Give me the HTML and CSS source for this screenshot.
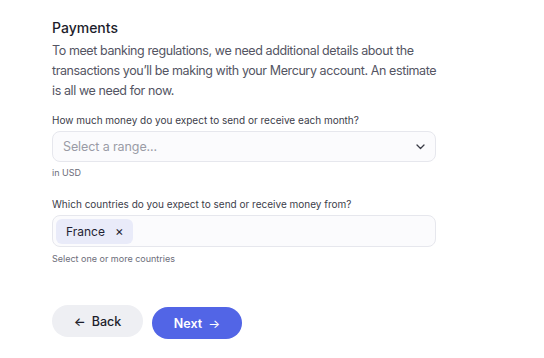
FILE: index.html
```html
<!DOCTYPE html>
<html>
<head>
<meta charset="utf-8">
<link rel="stylesheet" href="styles.css">
</head>
<body>
<main class="page">
  <h1 class="title">Payments</h1>
  <p class="intro">To meet banking regulations, we need additional details about the transactions you’ll be making with your Mercury account. An estimate is all we need for now.</p>

  <div class="field">
    <label class="label">How much money do you expect to send or receive each month?</label>
    <div class="select">
      <span class="placeholder">Select a range...</span>
      <svg class="chevron" width="9" height="6" viewBox="0 0 9 6"><path d="M1 1l3.5 3.5L8 1" fill="none" stroke="#3a3b46" stroke-width="1.3" stroke-linecap="round" stroke-linejoin="round"/></svg>
    </div>
    <div class="hint">in USD</div>
  </div>

  <div class="field field-second">
    <label class="label">Which countries do you expect to send or receive money from?</label>
    <div class="multi">
      <span class="chip">France <span class="chip-x">×</span></span>
    </div>
    <div class="hint hint-second">Select one or more countries</div>
  </div>

  <div class="actions">
    <button class="btn btn-back"><span class="arrow">←</span> Back</button>
    <button class="btn btn-next">Next <span class="arrow">→</span></button>
  </div>
</main>
</body>
</html>
```

FILE: styles.css
```css
* { box-sizing: border-box; }
body {
  margin: 0;
  background: #ffffff;
  font-family: Inter, "Noto Sans", sans-serif;
  color: #1c1c28;
}
.page {
  width: 384px;
  margin-left: 52px;
  padding-top: 18px;
}
.title {
  margin: 0;
  font-size: 14px;
  font-weight: 500;
  line-height: 20px;
  color: #1c1d2b;
}
.intro {
  margin: 3px 0 0;
  font-size: 12.5px;
  letter-spacing: -0.4px;
  line-height: 20px;
  color: #545563;
  width: 390px;
}
.field { margin-top: 12px; }
.field-second { margin-top: 18px; }
.label {
  display: block;
  font-size: 10px;
  line-height: 14px;
  color: #3c3d4a;
}
.select, .multi {
  margin-top: 4px;
  border: 1px solid #e6e7ed;
  border-radius: 8px;
  background: #fbfbfd;
  display: flex;
  align-items: center;
}
.select {
  height: 31px;
  justify-content: space-between;
  padding: 0 10px 0 10px;
}
.placeholder {
  font-size: 12.5px;
  letter-spacing: -0.1px;
  color: #9a9ba6;
}
.multi { height: 32px; padding: 0 3px; }
.chip {
  display: inline-flex;
  align-items: center;
  height: 25px;
  padding: 0 9px 0 10px;
  background: #e9ebf9;
  border-radius: 6px;
  font-size: 12px;
  color: #1f1f33;
}
.chip-x {
  margin-left: 10px;
  font-size: 13px;
  color: #23232f;
}
.hint {
  margin-top: 5px;
  font-size: 9px;
  line-height: 12px;
  color: #6c6d79;
}
.hint-second { margin-top: 6px; }
.actions {
  margin-top: 40px;
  display: flex;
  gap: 9px;
  align-items: flex-start;
}
.btn {
  height: 32px;
  border: none;
  border-radius: 16px;
  font-family: inherit;
  font-size: 12.5px;
  font-weight: 500;
  display: inline-flex;
  align-items: center;
  justify-content: center;
}
.btn-back {
  width: 91px;
  background: #eeeff3;
  color: #1c1d2b;
}
.btn-back .arrow { margin-right: 6px; }
.btn-next {
  width: 90px;
  margin-top: 2px;
  background: #5265e6;
  color: #ffffff;
  font-weight: 600;
}
.btn-next .arrow { margin-left: 6px; font-weight: 400; }
```
